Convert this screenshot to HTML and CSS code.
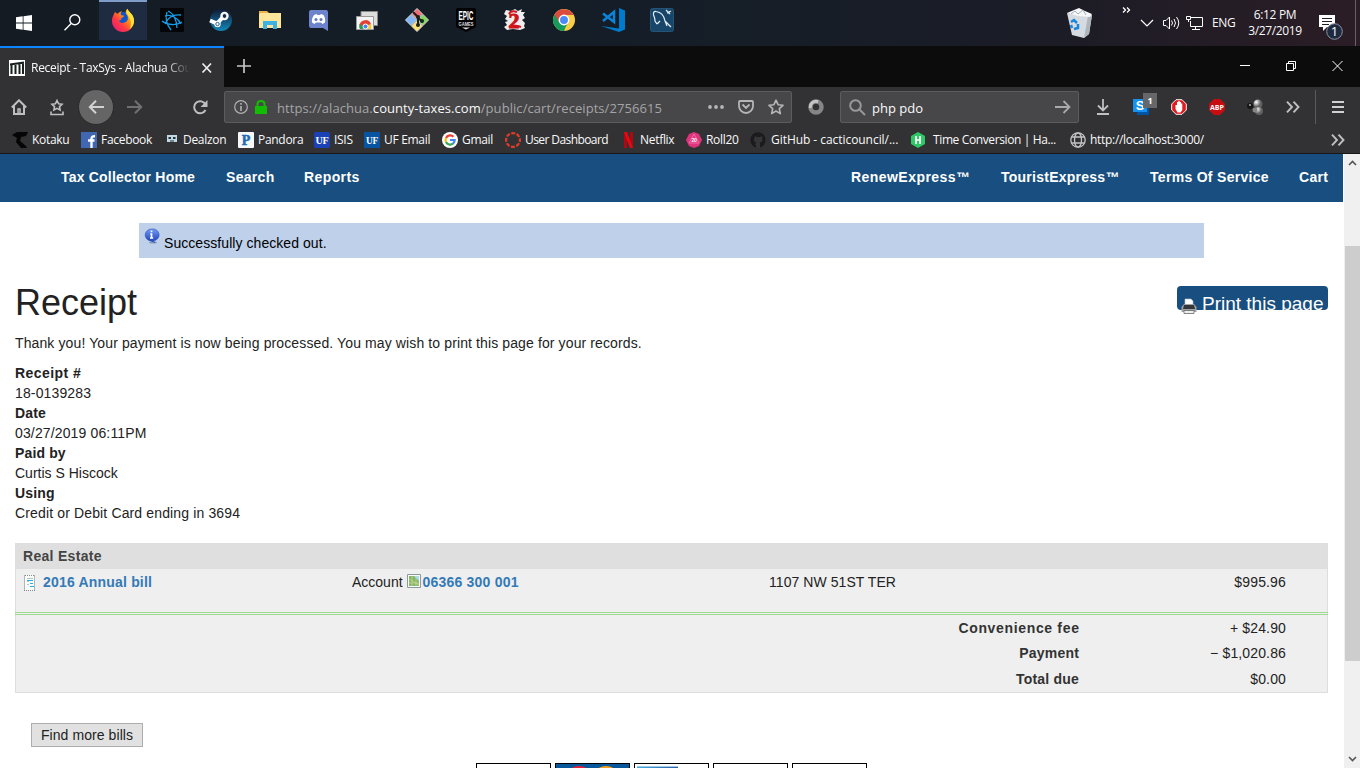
FILE: index.html
```html
<!DOCTYPE html>
<html lang="en">
<head>
<meta charset="utf-8">
<title>Receipt - TaxSys - Alachua County</title>
<link rel="stylesheet" href="styles.css">
</head>
<body>
<div class="screen">
<header class="taskbar">
  <div class="apps">
    <div class="app start"><svg width="16" height="16" viewBox="0 0 16 16" fill="#fff"><path d="M0 2.2 6.7 1.3V7.6H0zM7.5 1.2 16 0V7.6H7.5zM0 8.4H6.7V14.7L0 13.8zM7.5 8.4H16V16L7.5 14.8z"/></svg></div>
    <div class="app start find-app"><svg width="17" height="17" viewBox="0 0 17 17" fill="none" stroke="#fff" stroke-width="1.4"><circle cx="10.8" cy="5.8" r="5"/><path d="M7.2 9.5.5 16.2"/></svg></div>
    <div class="app active"><svg width="24" height="24" viewBox="0 0 24 24"><defs><linearGradient id="fx" x1="1" y1="0" x2="0" y2="1"><stop offset="0" stop-color="#fff44f"/><stop offset=".35" stop-color="#ff980e"/><stop offset=".65" stop-color="#ff3647"/><stop offset="1" stop-color="#e31587"/></linearGradient></defs><circle cx="12" cy="12.5" r="8.5" fill="#0a56cf"/><path fill="url(#fx)" d="M4 3.5C4.5 5 5.500 5.500 7 5.700 8.500 3.800 10 3.500 11 3.600 9.700 5 9.500 5.800 10 7L13 7.700C13 9 11.500 9.500 10 10.200L10.500 12C9 12 8.500 12 8 13 9.500 15.500 13 15.700 16 13 17.500 11 17 8 15.500 6.500 14 4.500 15 2 16.500.8 17 4 23 6 23 13A11 11 0 0 1 1 13C1 8.500 3 7 4 3.500z"/><path fill="#ffe13b" d="M16.500.8C17 4 23 6 23 13A10.500 10.500 0 0 1 19 21C21 15 19.500 11 17.500 8 15.500 5.500 15.500 3 16.500.8z"/></svg></div>
    <div class="app"><svg width="24" height="24" viewBox="0 0 24 24"><rect width="24" height="24" rx="1" fill="#040506"/><g fill="none" stroke="#149de8" stroke-width="1.300"><path d="M8 3C13 5 17 12 17 20M5 16C8 9 14 6 21 7M2 13C7 17 16 18 22 14M7 4C5 10 7 17 11 22M5 8C11 6 18 10 21 16"/></g></svg></div>
    <div class="app"><svg width="24" height="24" viewBox="0 0 24 24"><defs><linearGradient id="st" x1="0" y1="0" x2="0" y2="1"><stop offset="0" stop-color="#111b36"/><stop offset="1" stop-color="#1387b8"/></linearGradient></defs><circle cx="12" cy="12" r="11" fill="url(#st)"/><path d="M1 12.500 8 15.500 14 9" fill="none" stroke="#fff" stroke-width="4"/><circle cx="15.500" cy="8" r="4.200" fill="#fff"/><circle cx="15.500" cy="8" r="2.400" fill="#172846" stroke="#fff"/><circle cx="8.500" cy="16" r="3.200" fill="#fff"/><circle cx="8.500" cy="16" r="1.700" fill="none" stroke="#2b6390"/></svg></div>
    <div class="app"><svg width="24" height="24" viewBox="0 0 24 24"><path fill="#e9b44c" d="M1 3H9L11 5H22V20H1z"/><path fill="#ffe69a" d="M2 5H23V20H1V7z"/><path fill="#3eb2e3" d="M5 21V13H19V21H15V17H9V21z"/></svg></div>
    <div class="app"><svg width="24" height="24" viewBox="0 0 24 24"><path fill="#6d83cc" d="M4 2H19Q21 2 21 4V23L16 20H4Q2 20 2 18V4Q2 2 4 2z"/><path fill="#fff" d="M7 7 9.500 6 10.500 7H13L14 6 16.500 7C18 9 18.500 12 18 14.500L15.500 16 14 14.500H9L7.500 16 5 14.500C4.500 12 5.500 9 7 7z"/><circle cx="9" cy="11.500" r="1.500" fill="#6278bd"/><circle cx="14" cy="11.500" r="1.500" fill="#6278bd"/></svg></div>
    <div class="app"><svg width="24" height="24" viewBox="0 0 24 24"><path fill="#ddd" stroke="#888" d="M5 3.500H21.500V17.500H5z"/><path fill="#f4f4f4" stroke="#999" d="M.5 8.500H17.500V21.500H.5z"/><path fill="#e34133" d="M3.500 17A6 6 0 0 1 15 16L12 19H7z"/><path fill="#289c50" d="M3.500 16A6 6 0 0 0 4 21H9L7 18z"/><path fill="#fbc934" d="M15 16Q16 18 15 21H10L12 17z"/><circle cx="9.500" cy="18.500" r="2.500" fill="#4686ee" stroke="#fff"/></svg></div>
    <div class="app"><svg width="24" height="24" viewBox="0 0 24 24"><g stroke="#d6dbd8"><path fill="#f36c70" d="M12 .5 17.500 6 12 11.500 6.500 6z"/><path fill="#82b8f7" d="M6 6.500 11.500 12 6 17.500.5 12z"/><path fill="#83d75b" d="M18 6.500 23.500 12 18 17.500 12.500 12z"/><path fill="#ffe176" d="M12 12.500 17.500 18 12 23.500 6.500 18z"/></g><path d="M8 4 13 9V18M13 10 17 13" fill="none" stroke="#18211f" stroke-width="2"/><g fill="#18211f"><circle cx="13" cy="9" r="2"/><circle cx="17" cy="13" r="2"/><circle cx="13" cy="17" r="2"/></g></svg></div>
    <div class="app"><svg width="24" height="24" viewBox="0 0 24 24"><path fill="#030303" d="M3 0H20Q22 0 22 2V19L12 24 2 19V2Q2 0 3 0z"/><text x="12" y="12" text-anchor="middle" textLength="15" lengthAdjust="spacingAndGlyphs" class="epic">EPIC</text><text x="12" y="17.500" text-anchor="middle" textLength="15" lengthAdjust="spacingAndGlyphs" class="games">GAMES</text><path fill="#ddd" d="M8 19.500H16L12 21.500z"/></svg></div>
    <div class="app"><svg width="24" height="24" viewBox="0 0 24 24"><path fill="#eee" d="M3 2 8 3 12 1 15 3 19 1 18 4 22 4 20 7 22 10 19 12 22 15 21 18 22 20 17 22 10 21 4 22 1 19 4 17 2 14 5 13 2 11 4 8 1 6z"/><text x="11" y="19.500" text-anchor="middle" class="gw">2</text><path fill="none" stroke="#d1161c" stroke-width="2" d="M6 6Q8 2 14 4M6 19Q10 16 18 19"/></svg></div>
    <div class="app"><svg width="24" height="24" viewBox="0 0 24 24"><circle cx="12" cy="12" r="11" fill="#fbcd43"/><path fill="#159b5b" d="M2.500 6.500 12 12 12.500 23A11 11 0 0 1 2.500 6.500z"/><path fill="#db4b3e" d="M2.500 6.500A11 11 0 0 1 21.600 7H12V12L7 14z"/><path fill="#159b5b" d="M7 14 12 16 16 15 11.500 23 4 15z"/><circle cx="12" cy="12" r="4.700" fill="#4c8bf5" stroke="#fff" stroke-width="1.500"/></svg></div>
    <div class="app"><svg width="24" height="24" viewBox="0 0 24 24"><path fill="#007acc" d="M18 0 24 2.500V21.500L18 24 0 18 18 20.500z"/><path fill="none" stroke="#0b83d8" stroke-width="2.500" d="M2 5.500 13 14V4L2 13"/></svg></div>
    <div class="app"><svg width="24" height="24" viewBox="0 0 24 24"><rect x=".5" y=".5" width="23" height="23" rx="2" fill="#18466b" stroke="#265477"/><path fill="none" stroke="#e4edf2" stroke-width="1.200" d="M7 16 5 13Q5 10 3.500 7 3 3 6 3.500C10 4 14 7 15 13L18 16 21 19M7 16 10 13M15 13 17 18M16 2 20 6M17 5 21 3"/></svg></div>
  </div>
  <div class="tray">
    <svg class="bin" width="28" height="32" viewBox="0 0 28 32"><path fill="#d5dbe0" d="M1 6 26 8 23 27 18 31 6 28z"/><path fill="#aeb6bc" d="M22 9 26 8 23 27 18 31z"/><path fill="#f4f6f7" d="M1 6 8 3 13 1 19 4 26 7 24 10 12 9z"/><path d="M5 7 9 4 12 7 17 3 20 8" fill="none" stroke="#a7b1b8"/><path fill="none" stroke="#1685de" stroke-width="2.500" d="M5 15 8 13 11 16M12 17 12 21 8 22M5 18 6 21"/></svg>
    <svg class="more" width="9" height="6" viewBox="0 0 9 6" fill="none" stroke="#fff" stroke-width="1.300"><path d="M1 .5 3.500 3 1 5.500M5 .5 7.500 3 5 5.500"/></svg>
    <svg class="up" width="14" height="8" viewBox="0 0 14 8" fill="none" stroke="#fff" stroke-width="1.200"><path d="M1 1 7 7 13 1"/></svg>
    <svg class="vol" width="17" height="14" viewBox="0 0 17 14" fill="none" stroke="#fff"><path d="M.5 4.500H3L6.500 1V13L3 9.500H.5zM8.500 4.500Q10.500 7 8.500 9.500M11 3Q14 7 11 11M13.500 1Q18 7 13.500 13"/></svg>
    <svg class="net" width="17" height="16" viewBox="0 0 17 16" fill="none" stroke="#fff"><path d="M5 2.500H16.500V11.500H4.500V6M9.500 12V15M6 14.500H14M.5 1.500H4.500V4.500H.5zM2.500 5V7"/></svg>
    <span class="lang">ENG</span>
    <div class="clock"><span>6:12 PM</span><span>3/27/2019</span></div>
    <svg class="note" width="25" height="26" viewBox="0 0 25 26"><path fill="#fff" d="M0 0H16V12H8L4 16V12H0z"/><path stroke="#241c28" d="M3 3.500H13M3 6.500H13M3 9.500H10"/><circle cx="15.500" cy="16.500" r="7.800" fill="#1e2a40" stroke="#8b93a0"/><text x="15.500" y="21" text-anchor="middle" class="count">1</text></svg>
    <i class="edge"></i>
  </div>
</header>

<div class="tabs">
  <div class="tab">
    <svg width="16" height="16" viewBox="0 0 16 16"><path fill="#fff" d="M0 0H16V16H0z"/><path d="M1 4.500 15 2.500M2.500 5V14M6.500 5V14M10.500 4V14M14 3V14" fill="none" stroke="#17201d" stroke-width="2"/></svg>
    <span class="tab-title">Receipt - TaxSys - Alachua Cou</span>
    <svg class="close" width="12" height="12" viewBox="0 0 12 12" stroke="#eee" stroke-width="1.700"><path d="M1.500 1.500 10 10.500M10 1.500 1.500 10.500"/></svg>
  </div>
  <svg class="plus" width="14" height="14" viewBox="0 0 14 14" stroke="#c5c5c5" stroke-width="1.700"><path d="M7 0V14M0 7H14"/></svg>
  <div class="window-buttons">
    <svg width="11" height="11" viewBox="0 0 11 11" stroke="#fff"><path d="M0 4.500H10"/></svg>
    <svg width="11" height="11" viewBox="0 0 11 11" fill="none" stroke="#fff"><path d="M.5 2.500H7.500V9.500H.5zM2.500 2V.5H9.500V7.500H8"/></svg>
    <svg width="11" height="11" viewBox="0 0 11 11" stroke="#fff"><path d="M.5 0 10.500 10M10.500 0 .5 10"/></svg>
  </div>
</div>

<div class="toolbar">
  <svg class="home" width="16" height="16" viewBox="0 0 16 16" fill="none" stroke="#bfbfc0" stroke-width="2"><path d="M.8 8.500 8 1.300 15.200 8.500M3 7V15H13V7"/><path d="M7 15V10H9V15" stroke-width="1.500"/></svg>
  <svg class="lib" width="14" height="17" viewBox="0 0 14 17" fill="none" stroke="#bfbfc0" stroke-width="1.600"><path d="M7 1.500 8.600 4.800 12 5.300 9.500 7.600 10.100 11 7 9.400 3.900 11 4.500 7.600 2 5.300 5.400 4.800zM1 12.500V15.500H13V12.500"/></svg>
  <div class="back"><svg width="16" height="14" viewBox="0 0 16 14" fill="none" stroke="#d2d2d2" stroke-width="2"><path d="M16 7H2M8 .8 1.800 7 8 13.200"/></svg></div>
  <svg class="fwd" width="16" height="14" viewBox="0 0 16 14" fill="none" stroke="#707072" stroke-width="2"><path d="M0 7H14M8 .8 14.200 7 8 13.200"/></svg>
  <svg class="reload" width="16" height="15" viewBox="0 0 16 15" fill="none" stroke="#bfbfc0" stroke-width="2"><path d="M13.500 4.500A6 6 0 1 0 13.500 10"/><path fill="#bfbfc0" stroke="none" d="M15.500 0V7H8.500z"/></svg>
  <div class="url">
    <svg width="14" height="14" viewBox="0 0 14 14" fill="none" stroke="#b1b1b3" stroke-width="1.200"><circle cx="7" cy="7" r="6.300"/><path d="M7 6V11M7 3V4.800" stroke-width="1.600"/></svg>
    <svg class="lock" width="12" height="14" viewBox="0 0 12 14"><path fill="#12bc00" d="M0 6H12V14H0z"/><path fill="none" stroke="#12bc00" stroke-width="2" d="M2.500 7V4Q2.500 1 6 1T9.500 4V7"/></svg>
    <span class="address">https://alachua.<b>county-taxes.com</b>/public/cart/receipts/2756615</span>
    <svg class="dots" width="16" height="4" viewBox="0 0 16 4" fill="#b5b5b6"><circle cx="2" cy="2" r="1.900"/><circle cx="8" cy="2" r="1.900"/><circle cx="14" cy="2" r="1.900"/></svg>
    <svg class="pocket" width="16" height="14" viewBox="0 0 16 14" fill="none" stroke="#b5b5b6" stroke-width="1.800"><path d="M2 1H14Q15 1 15 2V6A7 7 0 0 1 1 6V2Q1 1 2 1zM4.500 4.500 8 8 11.500 4.500"/></svg>
    <svg class="star" width="16" height="16" viewBox="0 0 16 16" fill="none" stroke="#b5b5b6" stroke-width="1.600" stroke-linejoin="round"><path d="M8 1.200 10.100 5.700 15 6.300 11.300 9.600 12.300 14.600 8 12 3.700 14.600 4.700 9.600 1 6.300 5.900 5.700z"/></svg>
  </div>
  <svg class="ring" width="16" height="16" viewBox="0 0 16 16"><circle cx="8" cy="8" r="5.500" fill="none" stroke="#858585" stroke-width="4.500"/><path d="M2.500 9A5.500 5.500 0 0 1 10 2.800" fill="none" stroke="#c5c5c5" stroke-width="3"/></svg>
  <div class="search">
    <svg width="17" height="17" viewBox="0 0 17 17" fill="none" stroke="#98989a" stroke-width="2"><circle cx="6.500" cy="6.500" r="5.300"/><path d="M10.500 10.500 16 16"/></svg>
    <span>php pdo</span>
    <svg class="go" width="16" height="14" viewBox="0 0 16 14" fill="none" stroke="#a9a9ab" stroke-width="1.800"><path d="M0 7H14M8.500 1 14.500 7 8.500 13"/></svg>
  </div>
  <svg class="down" width="12" height="16" viewBox="0 0 12 16" fill="none" stroke="#c0c0c1" stroke-width="1.800"><path d="M6 0V11M1 6.500 6 11.500 11 6.500M0 15H12"/></svg>
  <svg class="stylish" width="25" height="23" viewBox="0 0 25 23"><path fill="#0054a5" d="M4 9H16V22H4z"/><path fill="#1691ee" d="M0 6H14V19H0z"/><text x="7" y="17" text-anchor="middle" class="s-mark">S</text><path fill="#666769" d="M10 0H24V15H10z"/><text x="17" y="11" text-anchor="middle" class="badge">1</text></svg>
  <svg class="adblock" width="16" height="16" viewBox="0 0 16 16"><path fill="#e21b20" stroke="#f4f4f4" d="M5 .7H11L15.300 5V11L11 15.300H5L.7 11V5z"/><path fill="#fff" d="M4.500 6H6V3H7.300V2H8.700V3H10V4.500H11.300V11L9.500 13.500H6.500L4.500 10z"/></svg>
  <svg class="abp" width="16" height="16" viewBox="0 0 16 16"><path fill="#c70d12" d="M5 0H11L16 5V11L11 16H5L0 11V5z"/><text x="8" y="11" text-anchor="middle" textLength="14" lengthAdjust="spacingAndGlyphs" class="abp-text">ABP</text></svg>
  <svg class="balls" width="16" height="17" viewBox="0 0 16 17"><defs><radialGradient id="ball" cx=".3" cy=".3"><stop stop-color="#fff"/><stop offset="1" stop-color="#606060"/></radialGradient></defs><circle cx="3" cy="7" r="3" fill="#151515"/><circle cx="3" cy="6" r="1" fill="#aaa"/><circle cx="11" cy="5" r="4.500" fill="url(#ball)"/><circle cx="12" cy="12" r="4" fill="url(#ball)"/><circle cx="8" cy="11" r="2.500" fill="#858585"/></svg>
  <svg class="over" width="14" height="12" viewBox="0 0 14 12" fill="none" stroke="#c0c0c1" stroke-width="1.900"><path d="M1 .7 6 6 1 11.300M7.500.7 12.500 6 7.500 11.300"/></svg>
  <i class="sep"></i>
  <svg class="menu" width="12" height="12" viewBox="0 0 12 12" stroke="#d0d0d1" stroke-width="2"><path d="M0 1H12M0 6H12M0 11H12"/></svg>
</div>

<nav class="bookmarks">
  <span class="bm kotaku"><svg width="16" height="16" viewBox="0 0 16 16"><path fill="#050505" d="M0 3 5 0H16L14 4 9 5 8 9 14 14 15 16H9L4 10 5 6z"/></svg><em>Kotaku</em></span>
  <span class="bm fb"><svg width="16" height="16" viewBox="0 0 16 16"><path fill="#4267b2" d="M0 0H16V16H0z"/><path d="M10.500 16V6.500Q10.500 4 14 4.300M7 8.500H13.500" fill="none" stroke="#fff" stroke-width="2.300"/></svg><em>Facebook</em></span>
  <span class="bm deal"><svg width="16" height="16" viewBox="0 0 16 16"><path fill="#c3d9e2" d="M3 3H13V10H3z"/><path fill="#25353d" d="M4.500 5H7V7H4.500zM9 5H11.500V7H9zM6 8.500H10V9.500H6z"/></svg><em>Dealzon</em></span>
  <span class="bm pan"><svg width="16" height="16" viewBox="0 0 16 16"><rect width="16" height="16" rx="1" fill="#f5f7f9"/><text x="8" y="13" text-anchor="middle" class="p-mark">P</text></svg><em>Pandora</em></span>
  <span class="bm isis"><svg width="16" height="16" viewBox="0 0 16 16"><rect width="16" height="16" rx="2" fill="#1a42b6"/><text x="8" y="12" text-anchor="middle" textLength="13" lengthAdjust="spacingAndGlyphs" class="uf">UF</text></svg><em>ISIS</em></span>
  <span class="bm ufm"><svg width="16" height="16" viewBox="0 0 16 16"><path fill="#0754a3" d="M0 0H16V16H0z"/><text x="8" y="11.500" text-anchor="middle" textLength="12" lengthAdjust="spacingAndGlyphs" class="uf">UF</text></svg><em>UF Email</em></span>
  <span class="bm gmail"><svg width="16" height="16" viewBox="0 0 16 16"><circle cx="8" cy="8" r="8" fill="#fff"/><g fill="none" stroke-width="2.200"><path stroke="#ea4335" d="M4 6A4.700 4.700 0 0 1 11.500 4.700"/><path stroke="#fbbc05" d="M4 10A5 5 0 0 1 4 6"/><path stroke="#34a853" d="M4 10A4.700 4.700 0 0 0 11 11.700"/><path stroke="#4285f4" d="M8 8H12.700Q12.700 10 11 11.700"/></g></svg><em>Gmail</em></span>
  <span class="bm dash"><svg width="16" height="16" viewBox="0 0 16 16"><circle cx="8" cy="8" r="6.900" fill="none" stroke="#e13e29" stroke-width="2.200" stroke-dasharray="3.900 1.520" stroke-dashoffset="1.950"/></svg><em>User Dashboard</em></span>
  <span class="bm netflix"><svg width="16" height="16" viewBox="0 0 16 16"><path fill="#b20710" d="M0 0H3V16H0zM6 0H9V16H6z"/><path fill="#e50914" d="M0 0H3L9 16H6z"/></svg><em>Netflix</em></span>
  <span class="bm roll"><svg width="16" height="16" viewBox="0 0 16 16"><path fill="#df347c" d="M8 0 13 2 16 8 13 14 8 16 3 14 0 8 3 2z"/><path fill="none" stroke="#f16ba3" d="M8 2 13 11H3z"/><text x="8" y="10" text-anchor="middle" class="d20">20</text></svg><em>Roll20</em></span>
  <span class="bm git"><svg width="16" height="16" viewBox="0 0 16 16"><circle cx="8" cy="8" r="7.700" fill="#1b1b1c"/><path fill="#353537" d="M5 4 7 5H10L12 4 12.500 8Q12 10 10 10.500V16H6V13L3.500 11.500 6 12V10.500Q3.500 10 4 7z"/></svg><em>GitHub - cacticouncil/...</em></span>
  <span class="bm hack"><svg width="16" height="16" viewBox="0 0 16 16"><path fill="#2ec866" d="M8 0 15 4V12L8 16 1 12V4z"/><path d="M6 4V12M10 4V12M6 8H10" stroke="#fff" stroke-width="1.700"/></svg><em>Time Conversion | Ha...</em></span>
  <span class="bm local"><svg width="16" height="16" viewBox="0 0 16 16" fill="none" stroke="#c4c4c5" stroke-width="1.300"><circle cx="8" cy="8" r="7.200"/><ellipse cx="8" cy="8" rx="3.500" ry="7.200"/><path d="M1.500 5H14.500M1.500 11H14.500"/></svg><em>http://localhost:3000/</em></span>
  <svg class="bm-over" width="14" height="12" viewBox="0 0 14 12" fill="none" stroke="#c0c0c1" stroke-width="1.900"><path d="M1 .7 6 6 1 11.300M7.500.7 12.500 6 7.500 11.300"/></svg>
</nav>

<div class="viewport">
  <main class="page">
    <nav class="site-nav">
      <a class="n1">Tax Collector Home</a><a class="n2">Search</a><a class="n3">Reports</a>
      <a class="n4">RenewExpress™</a><a class="n5">TouristExpress™</a><a class="n6">Terms Of Service</a><a class="n7">Cart</a>
    </nav>
    <div class="alert">
      <svg width="16" height="16" viewBox="0 0 16 16"><defs><linearGradient id="info" x1="0" y1="0" x2="0" y2="1"><stop stop-color="#719cef"/><stop offset="1" stop-color="#183bbd"/></linearGradient></defs><ellipse cx="9" cy="14.500" rx="4" ry="1" fill="#8798bb"/><path fill="url(#info)" stroke="#2b51b8" stroke-width=".6" d="M7.500 1A6.500 6 0 1 1 9 12.900L11 14.500 6.500 12.900A6.500 6 0 0 1 7.500 1z"/><path d="M7.500 2.500V4.200M6.300 6H7.500V10M6 10H9.200" fill="none" stroke="#fff" stroke-width="1.700"/></svg>
      <span>Successfully checked out.</span>
    </div>
    <div class="heading">
      <h1>Receipt</h1>
      <div class="print">
        <div class="print-button">Print this page</div>
        <svg class="printer" width="16" height="16" viewBox="0 0 16 16"><path fill="#fff" stroke="#bbc3ca" stroke-width=".6" d="M4 1H10L12 3V8H4z"/><path fill="#a1a4a3" d="M.5 9 3 6H13L15.500 9V14H.5z"/><path fill="#34383b" d="M3 7H13L14 11H2z"/><path fill="#eee" stroke="#64696b" stroke-width=".8" d="M3 12.500H13V15.500H3z"/></svg>
      </div>
    </div>
    <p class="thanks">Thank you! Your payment is now being processed. You may wish to print this page for your records.</p>
    <dl class="details"><dt class="number">Receipt #</dt><dd>18-0139283</dd><dt>Date</dt><dd>03/27/2019 06:11PM</dd><dt>Paid by</dt><dd class="name">Curtis S Hiscock</dd><dt>Using</dt><dd>Credit or Debit Card ending in 3694</dd></dl>
    <section class="bill">
      <div class="bill-head">Real Estate</div>
      <div class="bill-row">
        <div class="bill-name"><svg width="16" height="18" viewBox="0 0 16 18"><path fill="#fafcfc" d="M2 1H12V16H2z"/><path d="M2 1.500H12M1 16.500H13" stroke="#7d8c8d" stroke-dasharray="1 1"/><path d="M1.500 1V16M11.500 1V16" stroke="#aeb8bb"/><path d="M4 4.500H10M4 7.500H6M4 10.500H6" stroke="#b2c6ca"/><path d="M4 6.500H10M7 9.500H10M7 12.500H11" stroke="#24ade1"/></svg><a>2016 Annual bill</a></div>
        <div class="bill-account"><span>Account</span><svg width="15" height="16" viewBox="0 0 15 16"><path fill="#f8faf9" stroke="#8c9a9d" d="M.5 1.500H13.500V14.500H.5z"/><path fill="#86b766" d="M2 3H12V13H2z"/><path fill="#a5dcf5" d="M7 3H12V8z"/><path d="M2 6 12 12M5 3V13M2 10H12M9 3V13" stroke="#d3db9e" stroke-width=".6"/></svg><a>06366 300 001</a></div>
        <div class="bill-address">1107 NW 51ST TER</div>
        <div class="bill-amount">$995.96</div>
      </div>
      <div class="totals">
        <div><b class="fee">Convenience fee</b><span>+ $24.90</span></div>
        <div><b>Payment</b><span>− $1,020.86</span></div>
        <div><b>Total due</b><span>$0.00</span></div>
      </div>
    </section>
    <button class="find">Find more bills</button>
    <div class="cards"><div></div><div><svg width="73" height="10" viewBox="0 0 73 10"><path fill="#07579a" d="M0 0H73V10H0z"/><circle cx="23" cy="16" r="14" fill="#ef1d31"/><circle cx="50" cy="16" r="14" fill="#f7a01b"/></svg></div><div><svg width="73" height="10" viewBox="0 0 73 10"><defs><linearGradient id="cd"><stop stop-color="#42b0e8"/><stop offset="1" stop-color="#3159a4"/></linearGradient></defs><path fill="#9ecce7" d="M2 2H43V3H2z"/><path fill="url(#cd)" d="M2 3H43V10H2z"/></svg></div><div></div><div></div></div>
  </main>
  <aside class="scrollbar"><svg width="9" height="6" viewBox="0 0 9 6" fill="none" stroke="#555" stroke-width="1.600"><path d="M1 5 4.500 1.500 8 5"/></svg><i></i><svg width="9" height="6" viewBox="0 0 9 6" fill="none" stroke="#555" stroke-width="1.600"><path d="M1 1 4.500 4.500 8 1"/></svg></aside>
</div>
</div>
</body>
</html>
```
FILE: styles.css
```css
* { box-sizing: border-box; }
body { margin: 0; overflow: hidden; background: #fff; }
svg { display: block; flex: none; }
.screen { width: 1360px; height: 768px; overflow: hidden; display: flex; flex-direction: column; font: 12px/16px "Open Sans", "Noto Sans", sans-serif; color: #f9f9fa; white-space: nowrap; }

/* Desktop taskbar */
.taskbar { height: 46px; flex: none; display: flex; justify-content: space-between; background: linear-gradient(90deg, #141b23, #151e28 50%, #1a1c26 75%, #2b1d25); }
.apps { display: flex; }
.app { width: 49px; height: 40px; padding: 8px 0 0 13px; }
.app svg { overflow: visible; }
.app.start { padding: 15px 0 0 16px; }
.app.find-app { padding-left: 15px; padding-top: 14px; }
.app.active { background: linear-gradient(#809cc9 0 2px, #1e2b40 2px); background-size: 48px 40px; background-position: 1px 0; background-repeat: no-repeat; }
.epic { font: bold 12px "Liberation Sans", sans-serif; fill: #fff; }
.games { font: bold 5px "Liberation Sans", sans-serif; fill: #ddd; }
.gw { font: bold 22px "Liberation Serif", serif; fill: #cc1118; stroke: #cc1118; }
.tray { display: flex; align-items: flex-start; width: 294px; }
.bin { margin-top: 7px; }
.more { margin: 7px 0 0 28px; }
.up { margin: 19px 0 0 9px; }
.vol { margin: 16px 0 0 9px; }
.net { margin: 15px 0 0 6px; }
.lang { margin: 15px 0 0 9px; width: 24px; letter-spacing: -.35px; }
.clock { margin: 7px 0 0 9px; width: 60px; display: flex; flex-direction: column; align-items: center; letter-spacing: -.35px; }
.note { margin: 15px 0 0 14px; }
.count { font: 13px "Open Sans", sans-serif; fill: #fff; }
.edge { width: 1px; height: 46px; margin-left: 11px; background: #68616a; }

/* Browser tabs */
.tabs { height: 41px; flex: none; display: flex; background: #0c0c0d; }
.tab { width: 224px; height: 41px; border-top: 2px solid #0a84ff; background: #323234; display: flex; align-items: center; padding: 0 0 0 9px; }
.tab-title { width: 159px; margin-left: 6px; padding-top: 1px; overflow: hidden; letter-spacing: -.28px; -webkit-mask-image: linear-gradient(90deg, #000 84%, transparent 100%); }
.close { margin-left: 11px; }
.plus { margin: 13px 0 0 13px; }
.window-buttons { display: flex; gap: 35px; margin: 15px 17px 0 auto; }

.toolbar { height: 39px; flex: none; background: #323234; display: flex; align-items: center; padding: 1px 0 0 11px; }
.lib { margin-left: 23px; }
.back { width: 36px; height: 36px; border: 1px solid #2a2a2b; border-radius: 50%; background: #656566; display: flex; align-items: center; justify-content: center; margin-left: 14px; }
.fwd { margin-left: 13px; }
.reload { margin-left: 49px; }
.url, .search { height: 32px; border: 1px solid #5c5c5e; border-radius: 2px; background: #474749; display: flex; align-items: center; }
.url { width: 568px; margin-left: 16px; padding-left: 9px; }
.lock { margin: -1px 0 0 7px; }
.address { width: 430px; margin: 1px 0 0 10px; color: #a5a5a6; font-size: 13px; letter-spacing: .06px; }
.address b { color: #f9f9fa; font-weight: normal; }
.dots { margin-left: 1px; }
.pocket { margin-left: 14px; }
.star { margin-left: 14px; }
.ring { margin-left: 16px; }
.search { width: 239px; margin-left: 16px; padding: 0 7px 0 8px; font-size: 13px; }
.search span { margin: 1px auto 0 6px; }
.down { margin-left: 18px; }
.stylish { margin: -6px 0 0 24px; }
.adblock { margin-left: 13px; }
.abp { margin-left: 22px; }
.balls { margin-left: 22px; }
.over { margin-left: 23px; }
.sep { width: 1px; height: 34px; margin-left: 15px; background: #5b5b5d; }
.menu { margin-left: 16px; }
.s-mark { font: bold 13px "Liberation Sans", sans-serif; fill: #fff; }
.badge { font: bold 9px "Open Sans", sans-serif; fill: #fff; }
.abp-text { font: bold 7px "Open Sans", sans-serif; fill: #fff; }

.bookmarks { height: 28px; flex: none; display: flex; align-items: center; background: #323234; border-bottom: 1px solid #171718; padding-left: 12px; }
.bm { display: flex; align-items: center; gap: 4px; letter-spacing: -.3px; }
.bm em { font-style: normal; padding-top: 1px; }
.kotaku { width: 69px; } .fb { width: 83px; } .deal { width: 74px; gap: 3px; } .pan { width: 76px; }
.isis { width: 50px; } .ufm { width: 78px; } .gmail { width: 63px; } .dash { width: 119px; }
.dash em { letter-spacing: -.55px; } .git em { letter-spacing: -.05px; }
.bm.dash em { letter-spacing: -.58px; }
.netflix { width: 62px; gap: 0; } .roll { width: 64px; } .git { width: 160px; gap: 5px; } .hack { width: 160px; gap: 7px; }
.hack em { letter-spacing: -.38px; }
.bm-over { margin: 0 15px 0 auto; }
.p-mark { font: bold 14px "Liberation Serif", serif; fill: #1d6ab3; stroke: #1d6ab3; stroke-width: .5; }
.uf { font: bold 10px "Liberation Serif", serif; fill: #fff; }
.d20 { font: bold 5px "Liberation Sans", sans-serif; fill: #fff; }

/* Receipt page */
.viewport { flex: 1; min-height: 0; display: flex; font: 14px/20px "Liberation Sans", Arial, sans-serif; color: #222; }
.page { width: 1343px; background: #fff; overflow: hidden; }
.site-nav { height: 48px; background: #194f80; color: #fff; font-weight: bold; letter-spacing: .3px; display: flex; padding: 13px 0 0 61px; }
.n1 { width: 165px; letter-spacing: .2px; } .n2 { width: 78px; } .n3 { width: 547px; letter-spacing: .4px; }
.n4 { width: 150px; letter-spacing: .45px; } .n5 { width: 149px; letter-spacing: .25px; } .n6 { width: 149px; }
.alert { width: 1065px; height: 35px; margin: 21px 0 0 139px; background: #bfd0ea; color: #000; display: flex; padding: 5px 0 0 5px; letter-spacing: .06px; }
.alert span { margin: 5px 0 0 4px; }
.heading { display: flex; justify-content: space-between; height: 75px; padding: 25px 15px 0; }
h1 { margin: 0; font-size: 36px; line-height: 40px; font-weight: normal; }
.print { position: relative; width: 151px; height: 24px; margin-top: 3px; }
.print-button { height: 24px; padding: 8px 0 0 25px; border-radius: 4px; background: #194f80; color: #fff; font-size: 19px; overflow: hidden; }
.printer { position: absolute; left: 4px; top: 12px; }
.thanks { margin: 0 15px 10px; letter-spacing: .116px; }
.details { margin: 0 15px 20px; letter-spacing: .14px; }
.details .name { letter-spacing: 0; }
dt { font-weight: bold; }
.details .number { letter-spacing: .45px; }
dd { margin: 0; }
.bill { margin: 0 15px; width: 1313px; height: 150px; border: 1px solid #dedede; background: #efefef; }
.bill-head { height: 25px; padding: 2px 7px; background: #dfdfdf; color: #444; font-weight: bold; letter-spacing: .3px; }
.bill-row { display: flex; height: 46px; margin: 0 -1px; border-bottom: 3px double #9ddb8f; padding: 3px 42px 0 8px; }
.bill-row a, .bill-row div { display: flex; align-items: flex-start; }
.bill-row a { color: #337ab7; font-weight: bold; letter-spacing: .19px; }
.bill-name { width: 329px; }
.bill-name a { margin-left: 4px; }
.bill-name svg { margin-top: 2px; }
.bill-account { width: 417px; }
.bill-account svg { margin: 1px 1px 0 4px; }
.bill-row .bill-account a { margin-left: 0; letter-spacing: .2px; }
.bill-address { flex: 1; letter-spacing: .06px; }
.bill-amount { letter-spacing: .15px; }
.totals { color: #222; padding-top: 3px; }
.totals div { display: flex; justify-content: flex-end; height: 25.400px; line-height: 20px; padding-right: 41px; }
.totals b { color: #333; letter-spacing: .2px; }
.totals .fee { letter-spacing: .66px; margin-right: -.6px; }
.totals span { width: 207px; text-align: right; letter-spacing: .14px; }
.find { display: block; width: 112px; height: 24px; margin: 30px 0 0 31px; padding: 0; border: 1px solid #adadad; background: #e1e1e1; color: #222; font: 14px/20px "Liberation Sans", sans-serif; letter-spacing: .08px; }
.cards { display: flex; gap: 4px; margin: 16px 0 0 476px; }
.cards div { width: 75px; height: 45px; border: 1px solid #000; }
.scrollbar { width: 17px; background: #f0f0f0; border-left: 1px solid #fff; display: flex; flex-direction: column; align-items: center; padding: 6px 0; }
.scrollbar i { width: 15px; height: 415px; margin: 80px 0 auto; background: #cdcdcd; }
```
